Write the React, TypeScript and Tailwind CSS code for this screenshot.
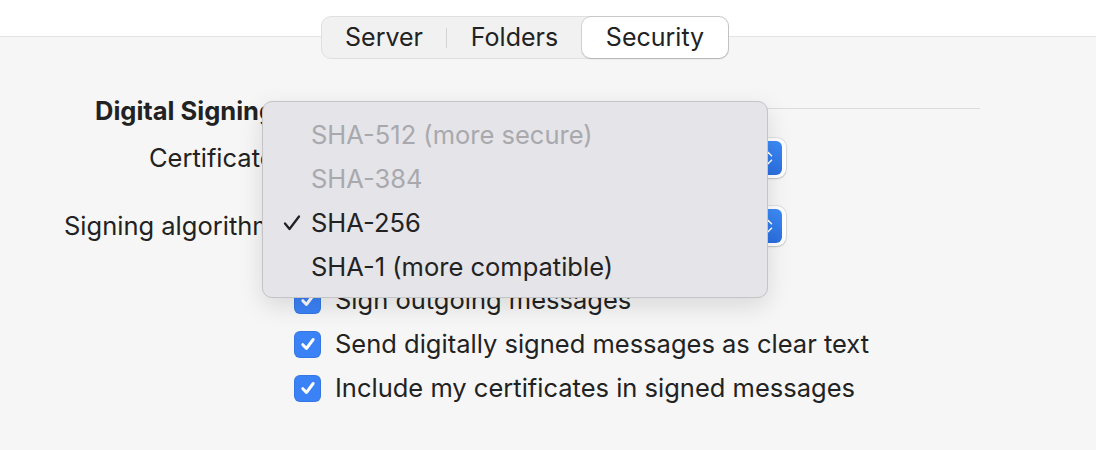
import React from 'react';

const font = { fontFamily: 'Inter, "Noto Sans", sans-serif' };

const Check = () => (
    <svg viewBox="0 0 16 16" className="w-[18px] h-[18px]" fill="none">
        <path d="M3.4 8.6 L6.6 12 L12.6 4" stroke="white" strokeWidth="2.6" strokeLinecap="round" strokeLinejoin="round" />
    </svg>
);

const Checkbox: React.FC<{ label: string }> = ({ label }) => (
    <div className="flex items-center h-[44px]">
        <div className="w-[27px] h-[27px] rounded-[6px] bg-[#3b82f7] flex items-center justify-center shadow-[inset_0_0_0_1px_rgba(0,0,0,0.08)]">
            <Check />
        </div>
        <span className="ml-[14px] text-[25.5px] text-[#222222]">{label}</span>
    </div>
);

const PopupButton = () => (
    <div className="w-[492px] h-[40px] bg-white rounded-[9px] shadow-[0_0_0_1px_rgba(0,0,0,0.08),0_1px_2px_rgba(0,0,0,0.15)] flex items-center justify-end pr-[4px]">
        <div className="w-[28px] h-[34px] rounded-[6px] bg-gradient-to-b from-[#3d8bf8] to-[#2b6fe0] flex items-center justify-center">
            <svg viewBox="0 0 16 20" className="w-[14px] h-[20px]" fill="none">
                <path d="M4 7.5 L8 3.5 L12 7.5 M4 12.5 L8 16.5 L12 12.5" stroke="white" strokeWidth="1.8" strokeLinecap="round" strokeLinejoin="round" />
            </svg>
        </div>
    </div>
);

const items = [
    { label: 'SHA-512 (more secure)', disabled: true },
    { label: 'SHA-384', disabled: true },
    { label: 'SHA-256', checked: true },
    { label: 'SHA-1 (more compatible)' },
];

export default function App() {
    return (
        <div className="w-[1096px] h-[450px] bg-[#f6f6f6] relative overflow-hidden" style={font}>
            {/* Toolbar band */}
            <div className="h-[37px] bg-white border-b border-[#e3e3e3]" />

            {/* Tabs */}
            <div className="ml-[321px] mt-[-21px] w-[408px] h-[43px] rounded-[10px] bg-[#f1f1f1] border border-[#e0e0e0] flex items-center relative text-[25px] text-[#222222]">
                <div className="w-[124px] text-center">Server</div>
                <div className="w-px h-[20px] bg-[#d4d4d4]" />
                <div className="w-[135px] text-center">Folders</div>
                <div className="flex-1 h-[41px] bg-white rounded-[9px] shadow-[0_0_0_1px_rgba(0,0,0,0.1),0_1px_2px_rgba(0,0,0,0.12)] flex items-center justify-center">
                    Security
                </div>
            </div>

            {/* Form */}
            <div className="mt-[31px] text-[25.5px] text-[#222222]">
                <div className="flex items-center h-[40px]">
                    <div className="w-[294px] pl-[95px] font-bold whitespace-nowrap mt-[2px]">Digital Signing:</div>
                    <div className="w-[686px] h-px bg-[#dcdcdc] mt-[-4px]" />
                </div>
                <div className="flex items-center h-[40px] mt-[8px]">
                    <div className="w-[294px] text-right pr-[12px] whitespace-nowrap">Certificate:</div>
                    <PopupButton />
                </div>
                <div className="flex items-center h-[40px] mt-[28px]">
                    <div className="w-[294px] text-right pr-[12px] whitespace-nowrap">Signing algorithm:</div>
                    <PopupButton />
                </div>
                <div className="ml-[294px] mt-[32px]">
                    <Checkbox label="Sign outgoing messages" />
                    <Checkbox label="Send digitally signed messages as clear text" />
                    <Checkbox label="Include my certificates in signed messages" />
                </div>
            </div>

            {/* Open menu */}
            <div className="absolute left-[262px] top-[101px] w-[506px] h-[197px] rounded-[10px] bg-[#e4e4e9] border border-[#c4c4c6] shadow-[0_8px_24px_rgba(0,0,0,0.12)] pt-[11px]">
                {items.map((it) => (
                    <div key={it.label} className="h-[44px] flex items-center text-[25.5px]">
                        <div className="w-[48px] flex justify-end pr-[10px]">
                            {it.checked && (
                                <svg viewBox="0 0 18 18" className="w-[18px] h-[18px]" fill="none">
                                    <path d="M2 9.5 L6.5 15 L16 2.5" stroke="#222222" strokeWidth="2.3" strokeLinecap="round" strokeLinejoin="round" />
                                </svg>
                            )}
                        </div>
                        <span className={it.disabled ? 'text-[#a9a9ad]' : 'text-[#222222]'}>{it.label}</span>
                    </div>
                ))}
            </div>
        </div>
    );
}
